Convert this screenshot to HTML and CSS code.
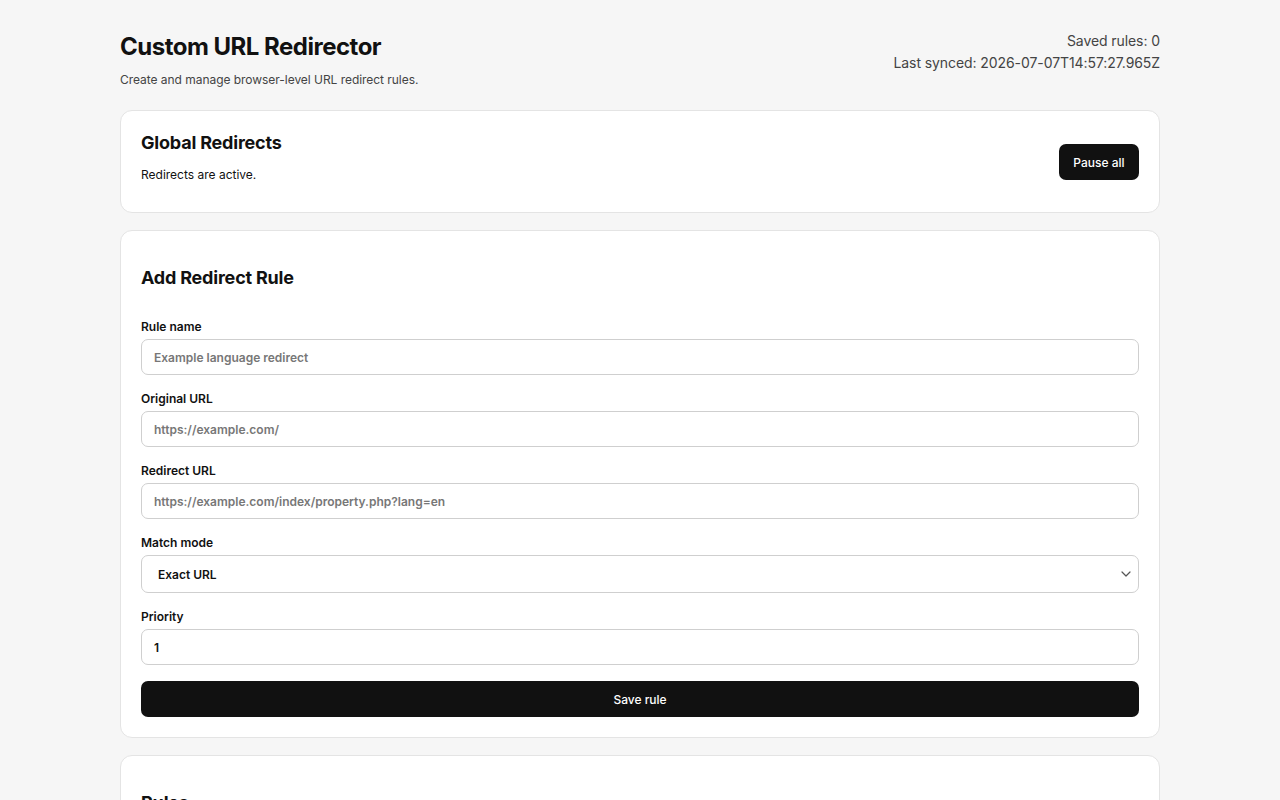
FILE: index.html
```html
<!DOCTYPE html>
<html lang="en">
<head>
<meta charset="utf-8">
<title>Custom URL Redirector</title>
<link rel="stylesheet" href="styles.css">
</head>
<body>
<main class="page">
  <header class="header">
    <div class="header-text">
      <h1 class="title">Custom URL Redirector</h1>
      <p class="subtitle">Create and manage browser-level URL redirect rules.</p>
    </div>
    <div class="meta">
      <div>Saved rules: 0</div>
      <div>Last synced: 2026-07-07T14:57:27.965Z</div>
    </div>
  </header>

  <section class="card card-global">
    <div class="global-text">
      <h2 class="card-title-tight">Global Redirects</h2>
      <p class="status status-global">Redirects are active.</p>
    </div>
    <button class="btn btn-small" type="button">Pause all</button>
  </section>

  <section class="card">
    <h2 class="card-title">Add Redirect Rule</h2>
    <form class="form">
      <label class="field">
        <span class="label">Rule name</span>
        <input class="input" type="text" placeholder="Example language redirect">
      </label>
      <label class="field">
        <span class="label">Original URL</span>
        <input class="input" type="text" placeholder="https://example.com/">
      </label>
      <label class="field">
        <span class="label">Redirect URL</span>
        <input class="input" type="text" placeholder="https://example.com/index/property.php?lang=en">
      </label>
      <label class="field">
        <span class="label">Match mode</span>
        <span class="select-wrap">
          <select class="select">
            <option>Exact URL</option>
            <option>Prefix</option>
            <option>Regex</option>
          </select>
          <svg class="chevron" width="10" height="6" viewBox="0 0 10 6" aria-hidden="true"><path d="M1 1l4 4 4-4" fill="none" stroke="#555" stroke-width="1.2" stroke-linecap="round" stroke-linejoin="round"/></svg>
        </span>
      </label>
      <label class="field">
        <span class="label">Priority</span>
        <input class="input input-value" type="number" value="1">
      </label>
      <button class="btn btn-block" type="button">Save rule</button>
    </form>
  </section>

  <section class="card">
    <h2 class="card-title">Rules</h2>
    <p class="status">No redirect rules yet.</p>
  </section>
</main>
</body>
</html>
```

FILE: styles.css
```css
* { box-sizing: border-box; }

html, body {
  margin: 0;
  padding: 0;
  background: #f6f6f6;
  color: #111;
  font-family: Inter, "Noto Sans", "Liberation Sans", sans-serif;
}

.page {
  width: 1040px;
  margin: 0 auto;
  padding: 32px 0 40px;
  display: flex;
  flex-direction: column;
  gap: 17px;
}

.header {
  display: flex;
  justify-content: space-between;
  align-items: flex-start;
  margin-bottom: 5px;
}

.title {
  margin: 0;
  font-size: 24px;
  line-height: 29px;
  font-weight: 700;
  letter-spacing: -0.5px;
  color: #111;
}

.subtitle {
  margin: 11px 0 0;
  font-size: 12px;
  line-height: 16px;
  letter-spacing: -0.04px;
  color: #444;
}

.meta {
  margin-top: -2px;
  text-align: right;
  font-size: 14px;
  line-height: 22px;
  letter-spacing: -0.08px;
  color: #444;
}

.card {
  background: #fff;
  border: 1px solid #e4e4e4;
  border-radius: 12px;
  padding: 20px;
}

.card-global {
  display: flex;
  align-items: center;
  justify-content: space-between;
  padding-top: 21px;
  padding-bottom: 20px;
}

.card-title-tight {
  margin: 0;
  font-size: 18px;
  line-height: 22px;
  font-weight: 700;
  letter-spacing: -0.2px;
}

.card-title {
  margin: 16px 0 30px;
  font-size: 18px;
  line-height: 22px;
  font-weight: 700;
  letter-spacing: -0.2px;
}

.status {
  margin: 12px 0;
  font-size: 12px;
  line-height: 15px;
  color: #111;
}

.status-global {
  margin: 13px 0 10px;
}

.btn {
  background: #111;
  color: #fff;
  border: none;
  font-family: inherit;
  font-size: 12px;
  font-weight: 500;
  cursor: pointer;
}

.btn-small {
  width: 80px;
  height: 36px;
  border-radius: 7px;
}

.btn-block {
  width: 100%;
  height: 36px;
  border-radius: 7px;
}

.form {
  display: flex;
  flex-direction: column;
  gap: 16px;
}

.field {
  display: flex;
  flex-direction: column;
  gap: 5px;
}

.label {
  font-size: 12px;
  line-height: 15px;
  font-weight: 600;
  color: #111;
}

.input {
  width: 100%;
  height: 36px;
  border: 1px solid #cfcfcf;
  border-radius: 7px;
  padding: 0 12px;
  font-family: inherit;
  font-size: 12px;
  font-weight: 600;
  color: #111;
  background: #fff;
  outline: none;
  -moz-appearance: textfield;
}

.input::-webkit-outer-spin-button,
.input::-webkit-inner-spin-button {
  -webkit-appearance: none;
  margin: 0;
}

.input::placeholder {
  color: #777;
  font-weight: 600;
}

.select-wrap {
  position: relative;
  display: block;
}

.select {
  width: 100%;
  height: 38px;
  border: 1px solid #cfcfcf;
  border-radius: 7px;
  padding: 0 16px;
  font-family: inherit;
  font-size: 12px;
  font-weight: 600;
  color: #111;
  background: #fff;
  appearance: none;
  -webkit-appearance: none;
  outline: none;
}

.chevron {
  position: absolute;
  right: 8px;
  top: 16px;
  pointer-events: none;
}
```
